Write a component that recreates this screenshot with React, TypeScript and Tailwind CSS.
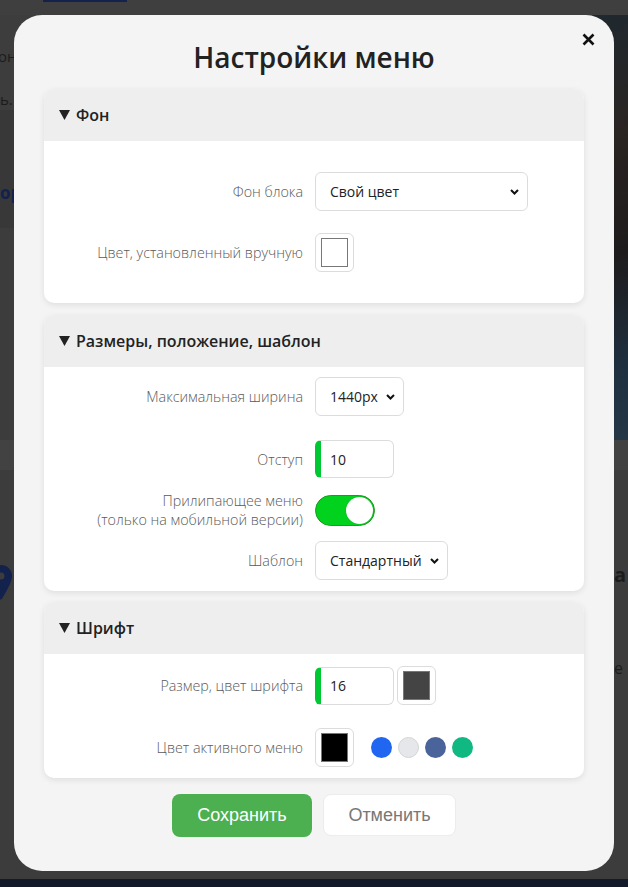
import { useState } from 'react';

function Chevron() {
  return (
    <svg width="9" height="6" viewBox="0 0 9 6" className="absolute right-[8px] top-1/2 -translate-y-1/2 pointer-events-none">
      <path d="M1 1l3.5 3.5L8 1" fill="none" stroke="#111" strokeWidth="2" />
    </svg>
  );
}

function Select({ value, width }: { value: string; width: string }) {
  return (
    <div className={`relative ${width} h-[39px] bg-white border border-[#dcdcdc] rounded-md flex items-center pl-[14px] text-[14px] text-[#222]`}>
      {value}
      <Chevron />
    </div>
  );
}

function NumberInput({ value }: { value: string }) {
  return (
    <div className="w-[79px] h-[38px] bg-white border border-[#dcdcdc] border-l-[6px] border-l-[#00c832] rounded-md flex items-center pl-[9px] text-[14px] text-[#222]">
      {value}
    </div>
  );
}

function Swatch({ color }: { color: string }) {
  return (
    <div className="w-[39px] h-[39px] bg-white border border-[#dcdcdc] rounded-md px-[5px] py-[4px]">
      <div className="w-full h-full border border-[#777]" style={{ background: color }} />
    </div>
  );
}

function Row({ label, children, className = '' }: { label: React.ReactNode; children: React.ReactNode; className?: string }) {
  return (
    <div className={`flex items-center ${className}`}>
      <div className="w-[271px] pr-3 text-right text-[14.3px] leading-[19px] font-light text-[#5a5a5a]">{label}</div>
      <div className="flex items-center">{children}</div>
    </div>
  );
}

function Card({ title, children, className = '' }: { title: string; children: React.ReactNode; className?: string }) {
  return (
    <div className={`bg-white rounded-[10px] shadow-[0_2px_6px_rgba(0,0,0,0.09)] ${className}`}>
      <div className="h-[52px] bg-[#eeeeee] rounded-t-[10px] flex items-center pl-[15px] text-[16px] font-semibold text-[#222]">
        <svg width="11" height="10" viewBox="0 0 11 10" className="mr-[6px]">
          <path d="M0 0h11L5.5 10z" fill="#222" />
        </svg>
        {title}
      </div>
      {children}
    </div>
  );
}

export default function App() {
  const [sticky, setSticky] = useState(true);

  return (
    <div className="relative w-[628px] h-[887px] overflow-hidden bg-[#3c3c3c] font-['Open_Sans',sans-serif]">
      {/* dimmed page behind the dialog */}
      <div className="h-[15px] bg-[#3f3f3f] pl-[43px]">
        <div className="w-[84px] h-[2px] bg-[#14214a]" />
      </div>
      <div className="flex h-[425px]">
        <div className="flex-1 flex flex-col">
          <div className="h-[95px] bg-[#3d3d3d] text-[#1c1c1c] text-[15px] leading-[43px] pt-[20px]">
            <div className="-ml-[2px]">он</div>
            <div>ь.</div>
          </div>
          <div className="h-[118px] bg-[#383838] text-[#13214d] font-bold text-[17px] pt-[70px]">ор</div>
          <div className="flex-1 bg-[#3c3c3c]" />
        </div>
        <div className="w-[140px] bg-[linear-gradient(160deg,#1c2a33_0%,#2a2422_35%,#1e1b1c_60%,#1f3040_85%,#253747_100%)]" />
      </div>
      <div className="h-[30px] bg-[#424242]" />
      <div className="flex justify-between h-[409px]">
        <div className="pt-[95px]">
          <svg width="12" height="36" viewBox="0 0 12 36">
            <path d="M1 0a11 11 0 0111 11c0 8-11 24-11 24S-10 19-10 11A11 11 0 011 0z" fill="#13214d" />
            <circle cx="1" cy="11" r="3.5" fill="#3c3c3c" />
          </svg>
        </div>
        <div className="text-[#1c1c1c] text-[20px] font-bold pt-[95px] pr-[2px] leading-none">а
          <div className="font-normal text-[16px] mt-[75px]">е</div>
        </div>
      </div>
      <div className="h-[8px] bg-[#131a2a]" />

      {/* dialog */}
      <div className="absolute left-[14px] top-[15px] w-[600px] h-[856px] bg-[#f4f4f4] rounded-[28px] px-[30px] pt-[25px]">
        <button className="absolute right-[19px] top-[18px] w-[13px] h-[13px]">
          <svg width="13" height="13" viewBox="0 0 13 13" className="block">
            <path d="M1.5 1.5l10 10M11.5 1.5l-10 10" stroke="#111" strokeWidth="2.6" />
          </svg>
        </button>
        <h1 className="text-center text-[28px] leading-[34px] font-semibold text-[#222] mb-[15px]">Настройки меню</h1>

        <Card title="Фон">
          <div className="pt-[31px] pb-[31px]">
            <Row label="Фон блока">
              <Select value="Свой цвет" width="w-[213px]" />
            </Row>
            <Row label="Цвет, установленный вручную" className="mt-[22px]">
              <Swatch color="#ffffff" />
            </Row>
          </div>
        </Card>

        <Card title="Размеры, положение, шаблон" className="mt-3">
          <div className="pt-[10px] pb-[11px]">
            <Row label="Максимальная ширина">
              <Select value="1440px" width="w-[89px]" />
            </Row>
            <Row label="Отступ" className="mt-[24px]">
              <NumberInput value="10" />
            </Row>
            <Row
              label={
                <>
                  Прилипающее меню
                  <br />
                  (только на мобильной версии)
                </>
              }
              className="mt-[13px]"
            >
              <button
                onClick={() => setSticky(!sticky)}
                className={`relative w-[60px] h-[31px] rounded-full border ${sticky ? 'bg-[#00d21e] border-[#1f9b1f]' : 'bg-[#ccc] border-[#bbb]'}`}
              >
                <span
                  className={`absolute top-[1px] w-[27px] h-[27px] rounded-full bg-white shadow-[0_0_1px_rgba(0,0,0,0.3)] ${sticky ? 'right-[1px]' : 'left-[1px]'}`}
                />
              </button>
            </Row>
            <Row label="Шаблон" className="mt-[12px]">
              <Select value="Стандартный" width="w-[133px]" />
            </Row>
          </div>
        </Card>

        <Card title="Шрифт" className="mt-[11px]">
          <div className="pt-[12px] pb-[11px]">
            <Row label="Размер, цвет шрифта">
              <NumberInput value="16" />
              <div className="ml-[3px]">
                <Swatch color="#444444" />
              </div>
            </Row>
            <Row label="Цвет активного меню" className="mt-[23px]">
              <Swatch color="#000000" />
              <div className="flex gap-[6px] ml-[17px]">
                <span className="w-[21px] h-[21px] rounded-full bg-[#2166f0]" />
                <span className="w-[21px] h-[21px] rounded-full bg-[#e6e7ea] border border-[#d4d4d4]" />
                <span className="w-[21px] h-[21px] rounded-full bg-[#4a639b]" />
                <span className="w-[21px] h-[21px] rounded-full bg-[#10b981]" />
              </div>
            </Row>
          </div>
        </Card>

        <div className="flex justify-center gap-[11px] mt-[16px] font-['Liberation_Sans',Arial,sans-serif] text-[18px]">
          <button className="w-[140px] h-[43px] rounded-lg bg-[#4caf50] text-white">Сохранить</button>
          <button className="w-[133px] h-[42px] rounded-lg bg-white border border-[#ececec] text-[#777]">Отменить</button>
        </div>
      </div>
    </div>
  );
}
